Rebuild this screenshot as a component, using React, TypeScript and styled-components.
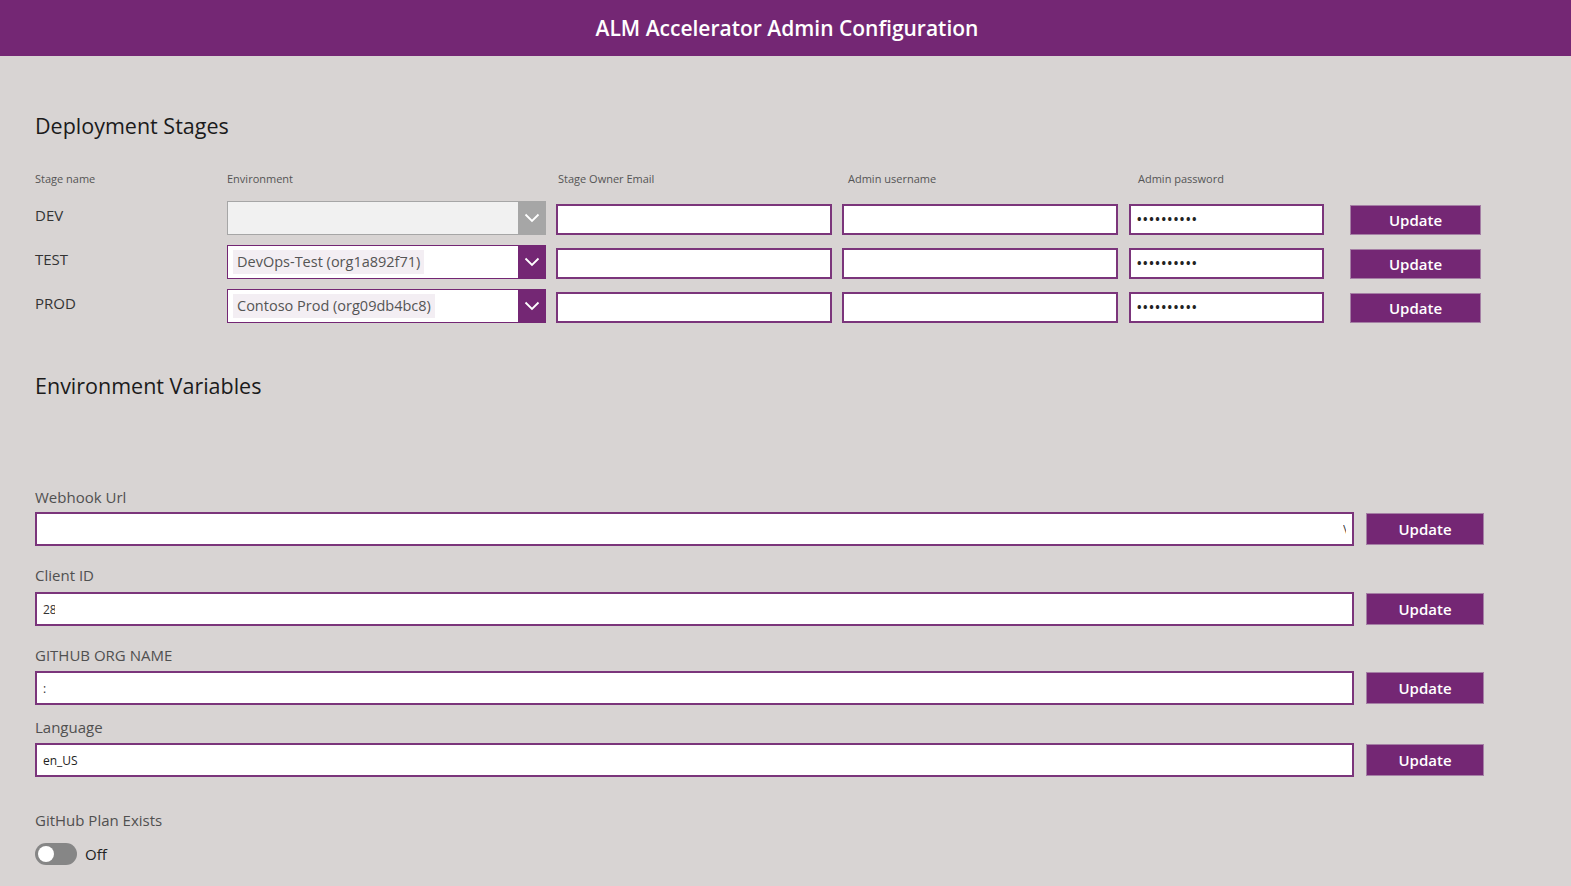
import styled, { createGlobalStyle } from 'styled-components';

const Global = createGlobalStyle`
  html, body {
    margin: 0;
    padding: 0;
    background: #d8d4d3;
    font-family: "Open Sans", "Noto Sans", "Liberation Sans", sans-serif;
  }
`;

const Page = styled.div`
  width: 1571px;
  min-height: 886px;
  background: #d8d4d3;
  overflow: hidden;
`;

const Header = styled.header`
  height: 56px;
  background: #742774;
  color: white;
  display: flex;
  align-items: center;
  justify-content: center;
  font-size: 21px;
  font-weight: 600;
  padding-left: 3px;
`;

const Main = styled.main`
  padding: 0 0 0 35px;
  display: flex;
  flex-direction: column;
`;

const Heading = styled.h2<{ $top: number }>`
  margin: ${(p) => p.$top}px 0 0;
  font-size: 21.5px;
  font-weight: 400;
  line-height: 28px;
  color: #1b1b1b;
`;

const ColHeads = styled.div`
  display: grid;
  grid-template-columns: 192px 331px 290px 290px 200px;
  margin-top: 31px;
  font-size: 11px;
  color: #555;
  line-height: 16px;
`;

const StageRow = styled.div<{ $top: number }>`
  display: grid;
  grid-template-columns: 182px 319px 276px 276px 196px 131px;
  column-gap: 10px;
  align-items: center;
  height: 34px;
  margin-top: ${(p) => p.$top}px;

  & > :nth-child(5) {
    margin-left: 1px;
  }
  & > :nth-child(6) {
    margin-left: 16px;
    margin-top: 5px;
  }
`;

const StageName = styled.div`
  font-size: 15px;
  color: #333;
  align-self: start;
  padding-top: 5px;
`;

const Dropdown = styled.div<{ $disabled?: boolean }>`
  height: 34px;
  box-sizing: border-box;
  display: flex;
  border: 1px solid ${(p) => (p.$disabled ? '#a6a6a6' : '#742774')};
  background: ${(p) => (p.$disabled ? '#f1f1f1' : '#fff')};
`;

const DropValue = styled.div`
  flex: 1;
  display: flex;
  align-items: center;
  padding-left: 5px;
`;

const Chip = styled.span`
  background: #f3eef3;
  color: #555;
  font-size: 14.5px;
  padding: 2px 4px;
  line-height: 20px;
`;

const Chevron = styled.div<{ $disabled?: boolean }>`
  width: 27px;
  background: ${(p) => (p.$disabled ? '#a6a6a6' : '#742774')};
  display: flex;
  align-items: center;
  justify-content: center;
`;

const SmallInput = styled.div`
  height: 31px;
  box-sizing: border-box;
  background: #fff;
  border: 2px solid #7b357b;
  display: flex;
  align-items: center;
  padding-left: 6px;
  margin-top: 3px;
`;

const Dots = styled.span`
  font-size: 12px;
  letter-spacing: 1.6px;
  color: #222;
  font-weight: 700;
`;

const Button = styled.button<{ $w: number; $h: number }>`
  width: ${(p) => p.$w}px;
  height: ${(p) => p.$h}px;
  background: #742774;
  border: 1px solid #a57fa5;
  color: #fff;
  font-family: inherit;
  font-size: 15px;
  font-weight: 600;
  padding: 0;
  cursor: pointer;
`;

const FieldBlock = styled.div<{ $top: number }>`
  margin-top: ${(p) => p.$top}px;
  display: flex;
  flex-direction: column;
`;

const FieldLabel = styled.div`
  font-size: 15px;
  color: #505050;
  line-height: 20px;
`;

const FieldRow = styled.div<{ $gap: number }>`
  display: flex;
  align-items: center;
  gap: 12px;
  margin-top: ${(p) => p.$gap}px;
`;

const WideInput = styled.div<{ $align?: string }>`
  width: 1319px;
  height: 34px;
  box-sizing: border-box;
  background: #fff;
  border: 2px solid #7b357b;
  display: flex;
  align-items: center;
  justify-content: ${(p) => p.$align || 'flex-start'};
  padding: 0 6px;
  font-size: 12px;
  color: #222;
`;

const Clip = styled.span<{ $w: number }>`
  display: inline-block;
  width: ${(p) => p.$w}px;
  overflow: hidden;
  white-space: nowrap;
  color: #333;
`;

const ToggleRow = styled.div`
  display: flex;
  align-items: center;
  gap: 8px;
  margin-top: 13px;
  font-size: 15px;
  color: #222;
`;

const Track = styled.div`
  width: 42px;
  height: 22px;
  border-radius: 11px;
  background: #868686;
  display: flex;
  align-items: center;
  padding-left: 3px;
  box-sizing: border-box;
`;

const Knob = styled.div`
  width: 16px;
  height: 16px;
  border-radius: 50%;
  background: #fff;
`;

const ChevronIcon = () => (
  <svg width="16" height="10" viewBox="0 0 16 10">
    <path d="M1.5 1.5 L8 8 L14.5 1.5" fill="none" stroke="#fff" strokeWidth="1.8" />
  </svg>
);

const stages = [
  { name: 'DEV', env: '', disabled: true },
  { name: 'TEST', env: 'DevOps-Test (org1a892f71)' },
  { name: 'PROD', env: 'Contoso Prod (org09db4bc8)' },
];

function App() {
  return (
    <Page>
      <Global />
      <Header>ALM Accelerator Admin Configuration</Header>
      <Main>
        <Heading $top={56}>Deployment Stages</Heading>
        <ColHeads>
          <span>Stage name</span>
          <span>Environment</span>
          <span>Stage Owner Email</span>
          <span>Admin username</span>
          <span>Admin password</span>
        </ColHeads>
        {stages.map((s, i) => (
          <StageRow key={s.name} $top={i === 0 ? 13 : 10}>
            <StageName>{s.name}</StageName>
            <Dropdown $disabled={s.disabled}>
              <DropValue>{s.env && <Chip>{s.env}</Chip>}</DropValue>
              <Chevron $disabled={s.disabled}>
                <ChevronIcon />
              </Chevron>
            </Dropdown>
            <SmallInput />
            <SmallInput />
            <SmallInput>
              <Dots>••••••••••</Dots>
            </SmallInput>
            <Button $w={131} $h={30}>Update</Button>
          </StageRow>
        ))}

        <Heading $top={50}>Environment Variables</Heading>

        <FieldBlock $top={87}>
          <FieldLabel>Webhook Url</FieldLabel>
          <FieldRow $gap={5}>
            <WideInput $align="flex-end">
              <Clip $w={3}>\</Clip>
            </WideInput>
            <Button $w={118} $h={32}>Update</Button>
          </FieldRow>
        </FieldBlock>

        <FieldBlock $top={19}>
          <FieldLabel>Client ID</FieldLabel>
          <FieldRow $gap={7}>
            <WideInput>
              <Clip $w={12}>28</Clip>
            </WideInput>
            <Button $w={118} $h={32}>Update</Button>
          </FieldRow>
        </FieldBlock>

        <FieldBlock $top={19}>
          <FieldLabel>GITHUB ORG NAME</FieldLabel>
          <FieldRow $gap={6}>
            <WideInput>
              <Clip $w={3}>:</Clip>
            </WideInput>
            <Button $w={118} $h={32}>Update</Button>
          </FieldRow>
        </FieldBlock>

        <FieldBlock $top={12}>
          <FieldLabel>Language</FieldLabel>
          <FieldRow $gap={6}>
            <WideInput>en_US</WideInput>
            <Button $w={118} $h={32}>Update</Button>
          </FieldRow>
        </FieldBlock>

        <FieldBlock $top={33}>
          <FieldLabel>GitHub Plan Exists</FieldLabel>
          <ToggleRow>
            <Track>
              <Knob />
            </Track>
            <span>Off</span>
          </ToggleRow>
        </FieldBlock>
      </Main>
    </Page>
  );
}

export default App;
